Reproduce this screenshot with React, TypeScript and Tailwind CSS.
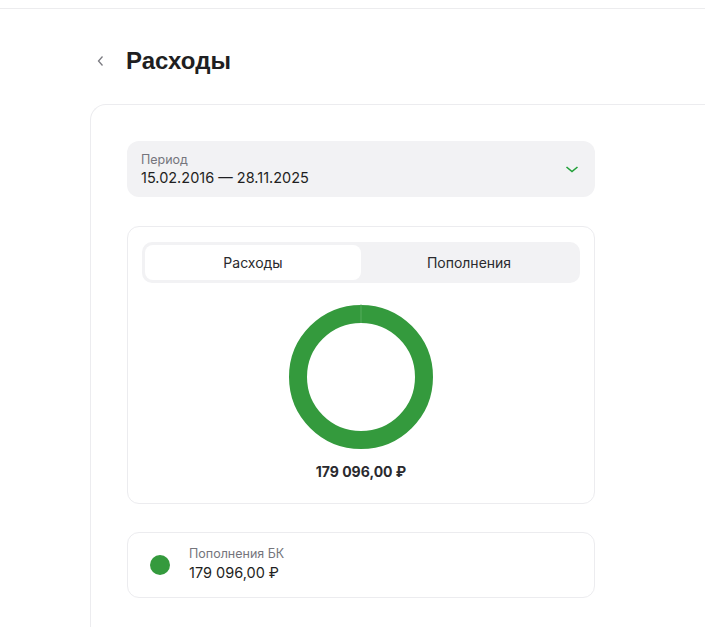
const GREEN = "#349a3d";

function Donut() {
  // single segment taking the whole ring, with a hairline seam at the top
  return (
    <svg width="146" height="146" viewBox="0 0 146 146">
      <circle cx="73" cy="73" r="63" fill="none" stroke={GREEN} strokeWidth="18" />
      <line x1="73" y1="0" x2="73" y2="19" stroke="#6cb873" strokeWidth="0.6" />
    </svg>
  );
}

export default function App() {
  return (
    <div
      className="min-h-[627px] w-full overflow-hidden bg-white text-[#1f1f22]"
      style={{ fontFamily: "Inter, 'Noto Sans', sans-serif" }}
    >
      <div className="h-[9px] border-b border-[#ececee]" />

      <div className="pl-[90px]">
        {/* Title */}
        <div className="flex h-[95px] items-center pt-[8px]">
          <svg width="10" height="12" viewBox="0 0 10 12" className="ml-[6px] mr-[20px]">
            <path d="M6.5 1.5 L2.5 6 L6.5 10.5" fill="none" stroke="#7a7a80" strokeWidth="1.3" />
          </svg>
          <h1
            className="text-[24px] font-bold leading-none text-[#1f1f22]"
            style={{ fontFamily: "'Liberation Sans', Arial, sans-serif" }}
          >
            Расходы
          </h1>
        </div>

        {/* Main card */}
        <div className="min-h-[540px] rounded-tl-[16px] border-l border-t border-[#ececef] pl-[36px] pt-[36px]">
          <div className="flex w-[468px] flex-col">
            {/* Period */}
            <div className="flex h-[56px] items-center justify-between rounded-[12px] bg-[#f2f2f4] pl-[14px] pr-[16px]">
              <div className="flex flex-col">
                <span className="text-[12.5px] leading-[17px] text-[#75757c]">Период</span>
                <span className="text-[14.5px] leading-[20px] text-[#1f1f22]">
                  15.02.2016 — 28.11.2025
                </span>
              </div>
              <svg width="14" height="10" viewBox="0 0 14 10">
                <path d="M1.5 3 L7 7.5 L12.5 3" fill="none" stroke="#21a038" strokeWidth="1.6" />
              </svg>
            </div>

            {/* Chart card */}
            <div className="mt-[29px] flex h-[278px] flex-col items-center rounded-[12px] border border-[#ececef] px-[14px] pt-[15px]">
              <div className="flex h-[41px] w-full rounded-[10px] bg-[#f2f2f4] p-[3px]">
                <div className="flex flex-1 items-center justify-center rounded-[8px] bg-white text-[14px] text-[#2a2a2e]">
                  Расходы
                </div>
                <div className="flex flex-1 items-center justify-center text-[14px] text-[#2a2a2e]">
                  Пополнения
                </div>
              </div>
              <div className="mt-[21px]">
                <Donut />
              </div>
              <div className="mt-[11px] text-[14px] font-bold text-[#2a2a2e]">179 096,00 ₽</div>
            </div>

            {/* Legend */}
            <div className="mt-[28px] flex h-[66px] items-center rounded-[12px] border border-[#ececef] pl-[22px]">
              <div className="h-[20px] w-[20px] rounded-full" style={{ backgroundColor: GREEN }} />
              <div className="ml-[19px] flex flex-col pb-[2px]">
                <span className="text-[12.5px] leading-[18px] text-[#75757c]">Пополнения БК</span>
                <span className="text-[14.5px] leading-[20px] text-[#1f1f22]">179 096,00 ₽</span>
              </div>
            </div>
          </div>
        </div>
      </div>
    </div>
  );
}
